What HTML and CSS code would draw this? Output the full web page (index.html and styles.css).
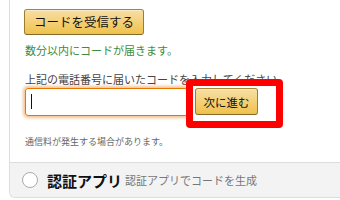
FILE: index.html
```html
<!DOCTYPE html>
<html lang="ja">
<head>
    <meta charset="UTF-8">
    <title>2段階認証</title>
    <link rel="stylesheet" href="styles.css">
</head>
<body>
    <div class="box">
        <div class="sms">
            <button class="btn btn-send">コードを受信する</button>
            <p class="notice">数分以内にコードが届きます。</p>

            <p class="label">上記の電話番号に届いたコードを入力してください。</p>
            <div class="code-row">
                <div class="field"><span class="caret"></span></div>
                <div class="next-wrap">
                    <button class="btn btn-next">次に進む</button>
                    <!-- annotation frame -->
                    <span class="mark"></span>
                </div>
            </div>

            <p class="fee">通信料が発生する場合があります。</p>
        </div>

        <div class="app-option">
            <span class="radio"></span>
            <span class="app-title">認証アプリ</span>
            <span class="app-desc">認証アプリでコードを生成</span>
        </div>
    </div>
</body>
</html>
```

FILE: styles.css
```css
/* ======= General ======= */
body {
    margin: 0;
    font-family: "Noto Sans CJK JP", "Noto Sans", sans-serif;
    color: #333;
    background: #fff;
    overflow: hidden;
}

.box {
    margin-left: 9px;
    border: 1px solid #ddd;
    border-top: none;
    border-right: none;
    border-radius: 0 0 0 6px;
}

/* ======= SMS section ======= */
.sms {
    padding: 8px 0 0 14px;
    height: 154px;
}

.btn {
    font-family: inherit;
    color: #111;
    background: linear-gradient(to bottom, #f7dfa5, #f0c14b);
    border: 1px solid;
    border-color: #a88734 #9c7e31 #846a29;
    border-radius: 3px;
    box-shadow: inset 0 1px 0 rgba(255, 255, 255, 0.4);
    padding: 0 10px;
    cursor: pointer;
}

.btn-send {
    height: 26px;
    font-size: 12.5px;
    padding: 0 9px;
}

.notice {
    margin: 7px 0 0 1px;
    font-size: 11px;
    line-height: 16px;
    color: #3d8b3d;
}

.label {
    margin: 13px 0 0 1px;
    font-size: 11px;
    line-height: 16px;
    color: #444;
}

.code-row {
    display: flex;
    align-items: center;
    gap: 7px;
    margin-top: 1px;
}

.field {
    width: 156px;
    height: 26px;
    margin-left: 1px;
    border: 1px solid #e77600;
    border-radius: 3px;
    box-shadow: 0 0 3px 2px rgba(228, 121, 17, 0.45);
    display: flex;
    align-items: center;
    padding-left: 5px;
}

.caret {
    width: 1px;
    height: 15px;
    background: #111;
}

.next-wrap {
    position: relative;
}

.btn-next {
    height: 27px;
    width: 63px;
    font-size: 11.5px;
    padding: 0;
    display: block;
}

.mark {
    position: absolute;
    top: -9px;
    bottom: -13px;
    left: -9px;
    right: -25px;
    border: 7px solid #f00;
    border-radius: 4px;
}

.fee {
    margin: 20px 0 0 1px;
    font-size: 9px;
    line-height: 12px;
    color: #666;
}

/* ======= App option ======= */
.app-option {
    background: #f3f3f3;
    border-top: 1px solid #ddd;
    border-radius: 0 0 0 6px;
    height: 34px;
    display: flex;
    align-items: center;
    padding-left: 12px;
}

.radio {
    width: 14px;
    height: 14px;
    border: 1px solid #aaa;
    border-radius: 50%;
    background: #fff;
    margin-right: 9px;
}

.app-title {
    font-size: 15px;
    font-weight: bold;
    color: #111;
    margin-right: 3px;
}

.app-desc {
    font-size: 11px;
    color: #777;
}
```
